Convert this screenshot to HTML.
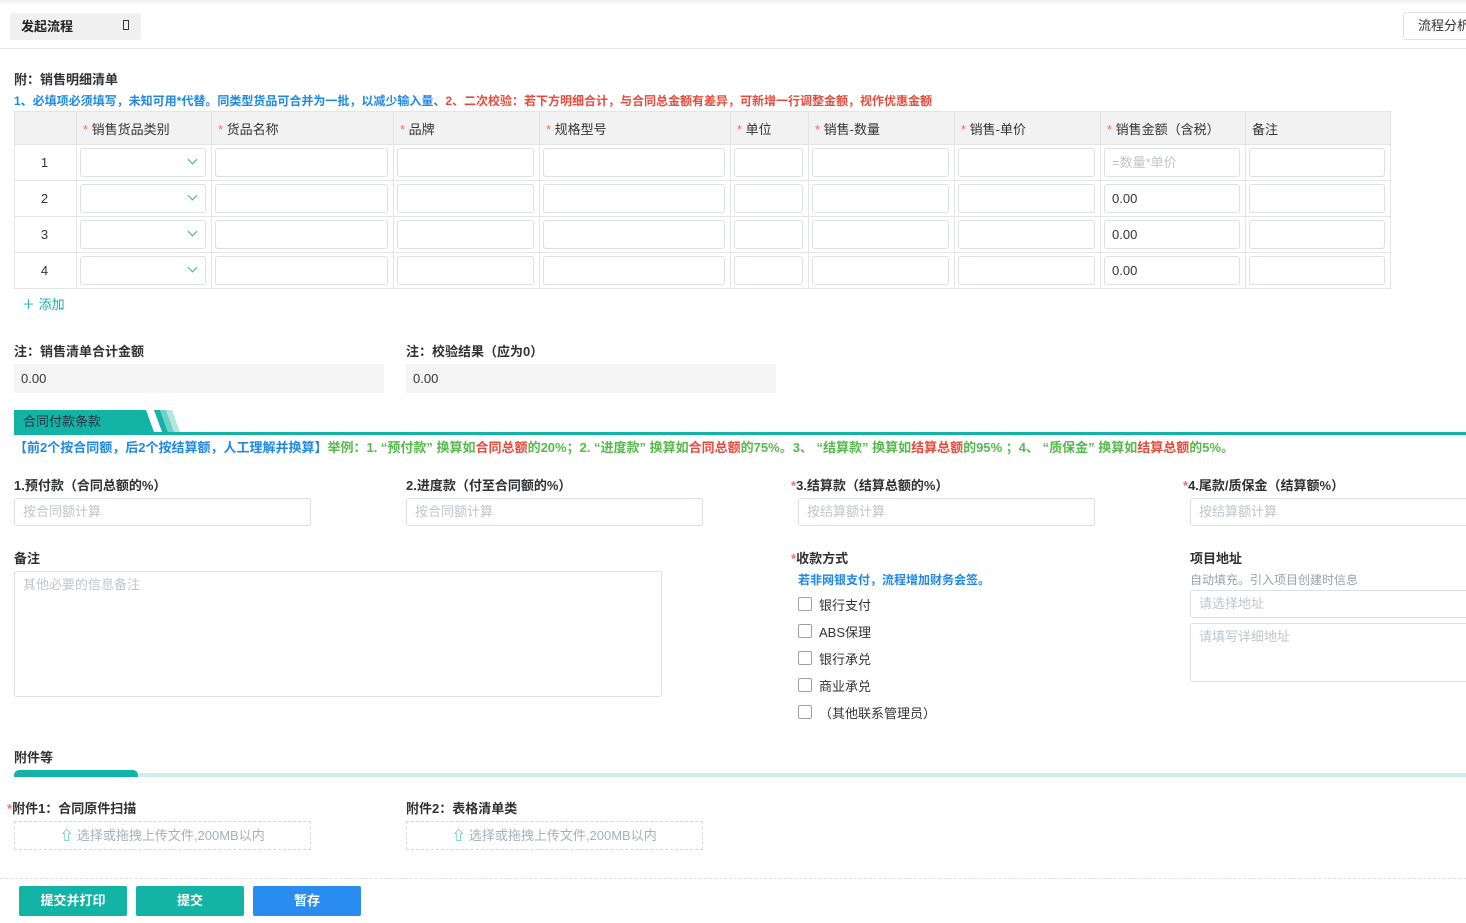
<!DOCTYPE html>
<html><head><meta charset="utf-8">
<style>
*{box-sizing:border-box;margin:0;padding:0}
body{width:1466px;height:923px;overflow:hidden;background:#fff;font-family:"Liberation Sans","Noto Sans CJK SC",sans-serif;font-size:13px;color:#333;position:relative}
.a{position:absolute;white-space:nowrap}
.b{font-weight:bold;color:#303133}
.r{color:#f56c6c}
.inp{position:absolute;border:1px solid #dcdfe6;border-radius:3px;background:#fff;color:#c0c4cc;padding-left:8px;line-height:26px;height:28px}
table{position:absolute;left:14px;top:111px;border-collapse:collapse;width:1377px}
td,th{border:1px solid #e4e4e4;padding:3px 5px 3px 3px;height:36px;vertical-align:middle}
tr{height:36px}
th{background:#f2f2f2;font-weight:normal;text-align:left;height:33px;padding-left:6px;color:#333}
td .i{height:29px;border:1px solid #dcdfe6;border-radius:3px;position:relative;padding-left:7px;line-height:27px;color:#333}
td.n{text-align:center;color:#333;background:#fff}
.chk{position:absolute;width:14px;height:14px;border:1px solid #9aa0ac;border-radius:2px}
.btn{position:absolute;top:886px;height:30px;width:108px;color:#fff;text-align:center;line-height:30px;border-radius:2px;font-weight:bold}
.up{color:#13b3a5}
</style></head><body>
<div class="a" style="left:0;top:0;width:1466px;height:5px;background:linear-gradient(#f0f0f0,#fff)"></div>
<div class="a" style="left:10px;top:13px;width:131px;height:27px;background:#f0f0f0;border-radius:2px"></div>
<div class="a b" style="left:21px;top:16px;font-weight:bold;color:#222">发起流程</div>
<div class="a" style="left:123px;top:20px;width:6px;height:10px;border:1px solid #333"></div>
<div class="a" style="left:1403px;top:12px;width:80px;height:28px;border:1px solid #dcdfe6;border-radius:3px;padding-left:14px;line-height:26px">流程分析</div>
<div class="a" style="left:0;top:48px;width:1466px;height:1px;background:#e6e6e6"></div>

<div class="a b" style="left:14px;top:69px">附：销售明细清单</div>
<div class="a" style="left:14px;top:92px;font-size:12px;font-weight:bold;color:#1e88e5">1、必填项必须填写，未知可用*代替。同类型货品可合并为一批，以减少输入量、<span style="color:#e84b3c">2、二次校验：若下方明细合计，与合同总金额有差异，可新增一行调整金额，视作优惠金额</span></div>

<table>
<tr style="height:33px"><th style="width:62px"></th><th style="width:135px"><span class="r">*</span> 销售货品类别</th><th style="width:182px"><span class="r">*</span> 货品名称</th><th style="width:146px"><span class="r">*</span> 品牌</th><th style="width:191px"><span class="r">*</span> 规格型号</th><th style="width:78px"><span class="r">*</span> 单位</th><th style="width:146px"><span class="r">*</span> 销售-数量</th><th style="width:146px"><span class="r">*</span> 销售-单价</th><th style="width:145px"><span class="r">*</span> 销售金额（含税）</th><th>备注</th></tr>
<tr><td class="n">1</td><td><div class="i"><span style="position:absolute;right:9px;top:7px;width:7px;height:7px;border-right:1.5px solid #2bb5a5;border-bottom:1.5px solid #2bb5a5;transform:rotate(45deg)"></span></div></td><td><div class="i"></div></td><td><div class="i"></div></td><td><div class="i"></div></td><td><div class="i"></div></td><td><div class="i"></div></td><td><div class="i"></div></td><td><div class="i" style="color:#c0c4cc">=数量*单价</div></td><td><div class="i"></div></td></tr>
<tr><td class="n">2</td><td><div class="i"><span style="position:absolute;right:9px;top:7px;width:7px;height:7px;border-right:1.5px solid #2bb5a5;border-bottom:1.5px solid #2bb5a5;transform:rotate(45deg)"></span></div></td><td><div class="i"></div></td><td><div class="i"></div></td><td><div class="i"></div></td><td><div class="i"></div></td><td><div class="i"></div></td><td><div class="i"></div></td><td><div class="i">0.00</div></td><td><div class="i"></div></td></tr>
<tr><td class="n">3</td><td><div class="i"><span style="position:absolute;right:9px;top:7px;width:7px;height:7px;border-right:1.5px solid #2bb5a5;border-bottom:1.5px solid #2bb5a5;transform:rotate(45deg)"></span></div></td><td><div class="i"></div></td><td><div class="i"></div></td><td><div class="i"></div></td><td><div class="i"></div></td><td><div class="i"></div></td><td><div class="i"></div></td><td><div class="i">0.00</div></td><td><div class="i"></div></td></tr>
<tr><td class="n">4</td><td><div class="i"><span style="position:absolute;right:9px;top:7px;width:7px;height:7px;border-right:1.5px solid #2bb5a5;border-bottom:1.5px solid #2bb5a5;transform:rotate(45deg)"></span></div></td><td><div class="i"></div></td><td><div class="i"></div></td><td><div class="i"></div></td><td><div class="i"></div></td><td><div class="i"></div></td><td><div class="i"></div></td><td><div class="i">0.00</div></td><td><div class="i"></div></td></tr>
</table>

<div class="a" style="left:22px;top:294px;color:#13b3a5">＋ 添加</div>

<div class="a b" style="left:14px;top:341px">注：销售清单合计金额</div>
<div class="a b" style="left:406px;top:341px">注：校验结果（应为0）</div>
<div class="a" style="left:14px;top:364px;width:370px;height:29px;background:#f5f5f5;padding-left:7px;line-height:29px">0.00</div>
<div class="a" style="left:406px;top:364px;width:370px;height:29px;background:#f5f5f5;padding-left:7px;line-height:29px">0.00</div>

<div class="a" style="left:14px;top:410px;width:140px;height:22px;background:#13b3a5;color:#234;padding-left:9px;line-height:23px;font-size:13px">合同付款条款</div>
<svg class="a" style="left:140px;top:410px" width="50" height="23"><polygon points="6,0 14,0 22,22 14,22" fill="#fff"/><polygon points="14,0 20,0 28,22 22,22" fill="#13b3a5"/><polygon points="20,0 26,0 34,22 28,22" fill="#6fd0c6"/><polygon points="26,0 32,0 40,22 34,22" fill="#b4e6e0"/></svg>
<div class="a" style="left:14px;top:432px;width:1452px;height:3px;background:#13b3a5"></div>
<div class="a" style="left:14px;top:437px;font-size:13px;font-weight:bold;color:#55b94c"><span style="color:#1e88e5">【前2个按合同额，后2个按结算额，人工理解并换算】</span>举例：1. “预付款” 换算如<span style="color:#e84b3c">合同总额</span>的20%；2. “进度款” 换算如<span style="color:#e84b3c">合同总额</span>的75%。3、 “结算款”   换算如<span style="color:#e84b3c">结算总额</span>的95%   ；4、 “质保金” 换算如<span style="color:#e84b3c">结算总额</span>的5%。</div>

<div class="a b" style="left:14px;top:475px">1.预付款（合同总额的%）</div>
<div class="a b" style="left:406px;top:475px">2.进度款（付至合同额的%）</div>
<div class="a b" style="left:791px;top:475px"><span class="r">*</span>3.结算款（结算总额的%）</div>
<div class="a b" style="left:1183px;top:475px"><span class="r">*</span>4.尾款/质保金（结算额%）</div>
<div class="inp" style="left:14px;top:498px;width:297px">按合同额计算</div>
<div class="inp" style="left:406px;top:498px;width:297px">按合同额计算</div>
<div class="inp" style="left:798px;top:498px;width:297px">按结算额计算</div>
<div class="inp" style="left:1190px;top:498px;width:297px">按结算额计算</div>

<div class="a b" style="left:14px;top:548px">备注</div>
<div class="inp" style="left:14px;top:571px;width:648px;height:126px;line-height:26px">其他必要的信息备注</div>

<div class="a b" style="left:791px;top:548px"><span class="r">*</span>收款方式</div>
<div class="a" style="left:798px;top:571px;font-size:12px;font-weight:bold;color:#1e88e5">若非网银支付，流程增加财务会签。</div>
<div class="chk" style="left:798px;top:597px"></div><div class="a" style="left:819px;top:595px">银行支付</div>
<div class="chk" style="left:798px;top:624px"></div><div class="a" style="left:819px;top:622px">ABS保理</div>
<div class="chk" style="left:798px;top:651px"></div><div class="a" style="left:819px;top:649px">银行承兑</div>
<div class="chk" style="left:798px;top:678px"></div><div class="a" style="left:819px;top:676px">商业承兑</div>
<div class="chk" style="left:798px;top:705px"></div><div class="a" style="left:819px;top:703px">（其他联系管理员）</div>

<div class="a b" style="left:1190px;top:548px">项目地址</div>
<div class="a" style="left:1190px;top:571px;font-size:12px;color:#9aa0ac">自动填充。引入项目创建时信息</div>
<div class="inp" style="left:1190px;top:590px;width:300px">请选择地址</div>
<div class="inp" style="left:1190px;top:623px;width:300px;height:59px">请填写详细地址</div>

<div class="a b" style="left:14px;top:747px">附件等</div>
<div class="a" style="left:14px;top:773px;width:1452px;height:4px;background:#ccefeb"></div>
<div class="a" style="left:14px;top:770px;width:124px;height:7px;background:#13b3a5;border-radius:5px 5px 0 0"></div>

<div class="a b" style="left:7px;top:798px"><span class="r">*</span>附件1：合同原件扫描</div>
<div class="a b" style="left:406px;top:798px">附件2：表格清单类</div>
<div class="a" style="left:14px;top:821px;width:297px;height:29px;border:1px dashed #d4d7dd;text-align:center;line-height:27px;color:#a8aeb8"><span class="up">⇧</span> 选择或拖拽上传文件,200MB以内</div>
<div class="a" style="left:406px;top:821px;width:297px;height:29px;border:1px dashed #d4d7dd;text-align:center;line-height:27px;color:#a8aeb8"><span class="up">⇧</span> 选择或拖拽上传文件,200MB以内</div>

<div class="a" style="left:0;top:878px;width:1466px;border-top:1px dashed #e0e0e0"></div>
<div class="btn" style="left:19px;background:#13b3a5">提交并打印</div>
<div class="btn" style="left:136px;background:#13b3a5">提交</div>
<div class="btn" style="left:253px;background:#2a8cf0">暂存</div>
</body></html>
